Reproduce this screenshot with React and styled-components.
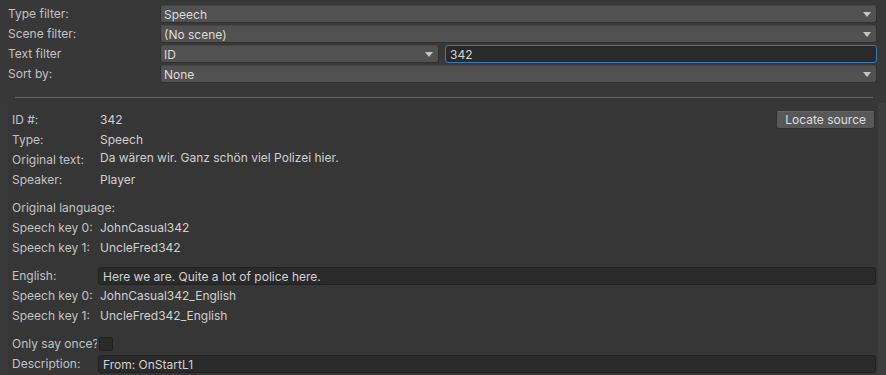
import styled, { createGlobalStyle } from "styled-components";

const Global = createGlobalStyle`
  html, body {
    margin: 0;
    background: #3c3c3c;
    font-family: Inter, "Noto Sans", sans-serif;
    font-size: 12px;
    color: #c4c4c4;
  }
`;

const Page = styled.div`
  width: 886px;
  height: 375px;
  overflow: hidden;
  background: #383838;
  display: flex;
  flex-direction: column;
`;

// Filtros de arriba
const Filters = styled.div`
  padding: 4px 9px 0 8px;
  display: flex;
  flex-direction: column;
`;

const FilterRow = styled.div`
  display: grid;
  grid-template-columns: 152px 1fr;
  align-items: center;
  height: 20px;
`;

const Label = styled.span`
  color: #c2c2c2;
  white-space: nowrap;
  overflow: ${(p) => (p.wide ? "visible" : "hidden")};
  line-height: 20px;
`;

const Split = styled.div`
  display: flex;
  gap: 6px;
  align-items: center;
`;

const Dropdown = styled.div`
  box-sizing: border-box;
  height: 18px;
  width: ${(p) => p.width || "auto"};
  flex: ${(p) => (p.width ? "none" : "1")};
  background: #515151;
  border: 1px solid #303030;
  border-top-color: #464646;
  border-radius: 3px;
  display: flex;
  align-items: center;
  justify-content: space-between;
  padding: 0 5px 0 3px;
  color: #dcdcdc;
`;

const Arrow = styled.span`
  width: 0;
  height: 0;
  border-left: 4px solid transparent;
  border-right: 4px solid transparent;
  border-top: 5px solid #c4c4c4;
  margin-top: 1px;
`;

const Field = styled.div`
  box-sizing: border-box;
  height: 18px;
  flex: 1;
  background: #2a2a2a;
  border: 1px solid ${(p) => (p.focused ? "#3a79bb" : "#212121")};
  border-radius: 3px;
  display: flex;
  align-items: center;
  padding: 0 4px;
  color: #d2d2d2;
  white-space: nowrap;
`;

const Divider = styled.div`
  height: 1px;
  background: #656565;
  margin: 13px 13px 5px 15px;
`;

const PanelWrap = styled.div`
  flex: 1;
  display: flex;
  background: #3a3a3a;
`;

const Panel = styled.div`
  margin-left: 8px;
  width: 870px;
  background: #363636;
  padding: 7px 2px 0 4px;
  box-sizing: border-box;
  display: flex;
  flex-direction: column;
`;

const Side = styled.div`
  flex: 1;
  background: #3e3e3e;
`;

const Row = styled.div`
  display: grid;
  grid-template-columns: 85px 1fr;
  align-items: center;
  height: 20px;
  margin-top: ${(p) => (p.gap ? "8px" : "0")};
`;

const Value = styled.span`
  color: #d0d0d0;
  line-height: 20px;
  white-space: nowrap;
  padding-left: 3px;
  position: relative;
  top: ${(p) => (p.raised ? "-2px" : "0")};
  display: flex;
  justify-content: space-between;
  align-items: center;
`;

const Button = styled.button`
  font: inherit;
  color: #dedede;
  background: #585858;
  border: 1px solid #303030;
  border-top-color: #656565;
  border-radius: 3px;
  height: 18px;
  padding: 0 8px;
  line-height: 14px;
  margin-right: 1px;
`;

const Check = styled.span`
  width: 14px;
  height: 14px;
  box-sizing: border-box;
  background: #2a2a2a;
  border: 1px solid #212121;
  border-radius: 2px;
  margin-left: -1px;
`;

const RowField = styled(Field)`
  margin-left: 1px;
`;

export default function App() {
  return (
    <Page>
      <Global />
      <Filters>
        <FilterRow>
          <Label>Type filter:</Label>
          <Dropdown>Speech<Arrow /></Dropdown>
        </FilterRow>
        <FilterRow>
          <Label>Scene filter:</Label>
          <Dropdown>(No scene)<Arrow /></Dropdown>
        </FilterRow>
        <FilterRow>
          <Label>Text filter</Label>
          <Split>
            <Dropdown width="279px">ID<Arrow /></Dropdown>
            <Field focused>342</Field>
          </Split>
        </FilterRow>
        <FilterRow>
          <Label>Sort by:</Label>
          <Dropdown>None<Arrow /></Dropdown>
        </FilterRow>
      </Filters>
      <Divider />
      <PanelWrap>
        <Panel>
          <Row>
            <Label>ID #:</Label>
            <Value>342<Button>Locate source</Button></Value>
          </Row>
          <Row>
            <Label>Type:</Label>
            <Value>Speech</Value>
          </Row>
          <Row>
            <Label>Original text:</Label>
            <Value raised>Da wären wir. Ganz schön viel Polizei hier.</Value>
          </Row>
          <Row>
            <Label>Speaker:</Label>
            <Value>Player</Value>
          </Row>
          <Row gap>
            <Label wide>Original language:</Label>
            <Value />
          </Row>
          <Row>
            <Label>Speech key 0:</Label>
            <Value>JohnCasual342</Value>
          </Row>
          <Row>
            <Label>Speech key 1:</Label>
            <Value>UncleFred342</Value>
          </Row>
          <Row gap>
            <Label>English:</Label>
            <RowField>Here we are. Quite a lot of police here.</RowField>
          </Row>
          <Row>
            <Label>Speech key 0:</Label>
            <Value>JohnCasual342_English</Value>
          </Row>
          <Row>
            <Label>Speech key 1:</Label>
            <Value>UncleFred342_English</Value>
          </Row>
          <Row gap>
            <Label>Only say once?</Label>
            <Value><Check /></Value>
          </Row>
          <Row>
            <Label>Description:</Label>
            <RowField>From: OnStartL1</RowField>
          </Row>
        </Panel>
        <Side />
      </PanelWrap>
    </Page>
  );
}
